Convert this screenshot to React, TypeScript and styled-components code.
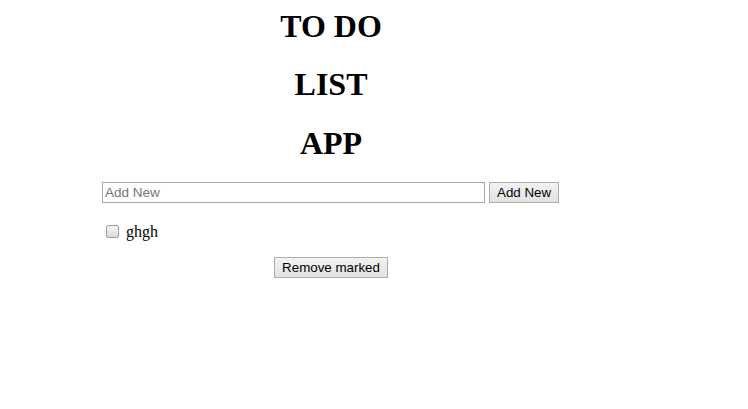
import React from "react";
import styled, { createGlobalStyle } from "styled-components";

const Global = createGlobalStyle`
  html, body { margin: 0; padding: 0; background: #fff; }
  body { font-family: "Liberation Serif", "Times New Roman", serif; color: #000; }
`;

const Page = styled.div`
  width: 462px;
  margin-left: 100px;
  display: flex;
  flex-direction: column;
`;

const Title = styled.h1`
  width: 110px;
  margin: -3.5px auto 0;
  text-align: center;
  font-size: 32px;
  line-height: 58.5px;
  font-weight: bold;
`;

const FormRow = styled.form`
  display: flex;
  gap: 4px;
  padding-left: 2px;
  margin-top: 10px;
`;

const TextInput = styled.input`
  box-sizing: border-box;
  width: 383px;
  height: 21px;
  border: 1px solid #a9a9a9;
  padding: 1px 2px;
  font-family: "Liberation Sans", Arial, sans-serif;
  font-size: 13.5px;
  color: #000;
  outline: none;
  &::placeholder { color: #757575; }
`;

const Button = styled.button`
  box-sizing: border-box;
  height: 21px;
  padding: 1px 7px;
  border: 1px solid #adadad;
  border-radius: 0;
  background: linear-gradient(#f2f2f2, #e2e2e2);
  font-family: "Liberation Sans", Arial, sans-serif;
  font-size: 13.33px;
  color: #000;
`;

const List = styled.ul`
  list-style: none;
  margin: 17px 0 0;
  padding: 0 0 0 6px;
`;

const Item = styled.li`
  display: flex;
  align-items: center;
  gap: 7px;
  font-size: 16px;
  height: 22px;
  padding-top: 1px;
`;

const Check = styled.input`
  appearance: none;
  margin: 0 0 1px;
  width: 13px;
  height: 13px;
  border: 1px solid #a0a0a0;
  border-radius: 2px;
  background: linear-gradient(#f4f4f4, #dcdcdc);
  box-sizing: border-box;
`;

const Footer = styled.div`
  display: flex;
  justify-content: center;
  margin-top: 14px;
`;

export default function App() {
  return (
    <>
      <Global />
      <Page>
        <Title>TO DO LIST APP</Title>
        <FormRow onSubmit={(e) => e.preventDefault()}>
          <TextInput placeholder="Add New" />
          <Button type="submit">Add New</Button>
        </FormRow>
        <List>
          <Item>
            <Check type="checkbox" />
            <span>ghgh</span>
          </Item>
        </List>
        <Footer>
          <Button type="button">Remove marked</Button>
        </Footer>
      </Page>
    </>
  );
}
